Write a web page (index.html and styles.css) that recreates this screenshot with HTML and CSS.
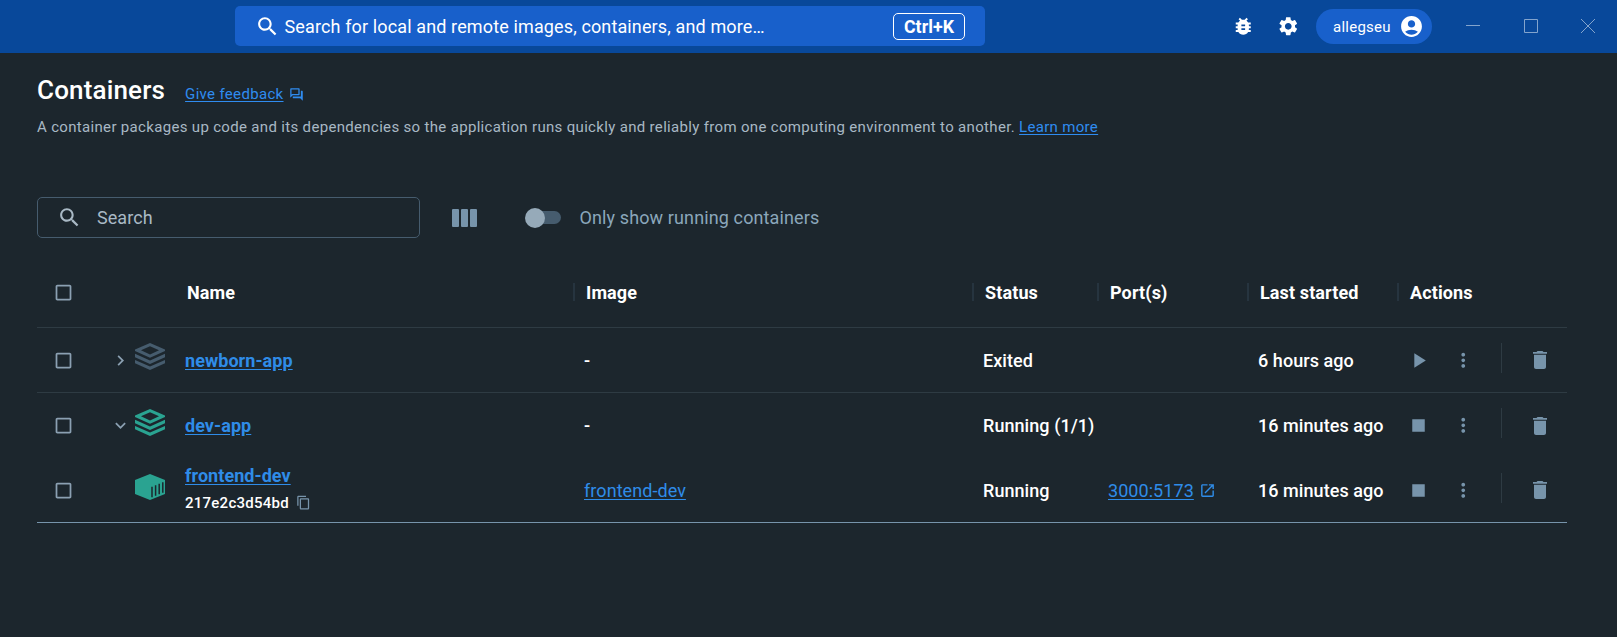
FILE: index.html
```html
<!DOCTYPE html>
<html lang="en">
<head>
<meta charset="utf-8">
<title>Containers</title>
<link rel="stylesheet" href="styles.css">
</head>
<body>
<svg class="defs" aria-hidden="true">
  <symbol id="search" viewBox="0 0 24 24"><path d="M15.5 14h-.79l-.28-.27C15.41 12.59 16 11.11 16 9.5 16 5.91 13.09 3 9.5 3S3 5.91 3 9.5 5.91 16 9.5 16c1.61 0 3.09-.59 4.23-1.57l.27.28v.79l5 4.99L20.49 19l-4.99-5zm-6 0C7.01 14 5 11.99 5 9.5S7.01 5 9.5 5 14 7.01 14 9.5 11.99 14 9.5 14z"/></symbol>
  <symbol id="bug" viewBox="0 0 24 24"><path d="M20 8h-2.81c-.45-.78-1.07-1.45-1.82-1.96L17 4.41 15.59 3l-2.17 2.17C12.96 5.06 12.49 5 12 5c-.49 0-.96.06-1.41.17L8.41 3 7 4.41l1.62 1.63C7.88 6.55 7.26 7.22 6.81 8H4v2h2.09c-.05.33-.09.66-.09 1v1H4v2h2v1c0 .34.04.67.09 1H4v2h2.81c1.04 1.79 2.97 3 5.19 3s4.15-1.21 5.19-3H20v-2h-2.09c.05-.33.09-.66.09-1v-1h2v-2h-2v-1c0-.34-.04-.67-.09-1H20V8zm-6 8h-4v-2h4v2zm0-4h-4v-2h4v2z"/></symbol>
  <symbol id="gear" viewBox="0 0 24 24"><path d="M19.14 12.94c.04-.3.06-.61.06-.94 0-.32-.02-.64-.07-.94l2.03-1.58c.18-.14.23-.41.12-.61l-1.92-3.32c-.12-.22-.37-.29-.59-.22l-2.39.96c-.5-.38-1.03-.7-1.62-.94l-.36-2.54c-.04-.24-.24-.41-.48-.41h-3.84c-.24 0-.43.17-.47.41l-.36 2.54c-.59.24-1.13.57-1.62.94l-2.39-.96c-.22-.08-.47 0-.59.22L2.74 8.87c-.12.21-.08.47.12.61l2.03 1.58c-.05.3-.09.63-.09.94s.02.64.07.94l-2.03 1.58c-.18.14-.23.41-.12.61l1.92 3.32c.12.22.37.29.59.22l2.39-.96c.5.38 1.03.7 1.62.94l.36 2.54c.05.24.24.41.48.41h3.84c.24 0 .44-.17.47-.41l.36-2.54c.59-.24 1.13-.56 1.62-.94l2.39.96c.22.08.47 0 .59-.22l1.92-3.32c.12-.22.07-.47-.12-.61l-2.01-1.58zM12 15.6c-1.98 0-3.6-1.62-3.6-3.6s1.62-3.6 3.6-3.6 3.6 1.62 3.6 3.6-1.62 3.6-3.6 3.6z"/></symbol>
  <symbol id="account" viewBox="0 0 24 24"><path d="M12 2C6.48 2 2 6.48 2 12s4.48 10 10 10 10-4.48 10-10S17.52 2 12 2zm0 4c1.93 0 3.5 1.57 3.5 3.5S13.93 13 12 13s-3.5-1.57-3.5-3.5S10.07 6 12 6zm0 14c-2.03 0-4.43-.82-6.14-2.88C7.55 15.8 9.68 15 12 15s4.45.8 6.14 2.12C16.43 19.18 14.03 20 12 20z"/></symbol>
  <symbol id="forum" viewBox="0 0 24 24"><path d="M15 4v7H5.17L4 12.17V4h11m1-2H3c-.55 0-1 .45-1 1v14l4-4h10c.55 0 1-.45 1-1V3c0-.55-.45-1-1-1zm5 4h-2v9H6v2c0 .55.45 1 1 1h11l4 4V7c0-.55-.45-1-1-1z"/></symbol>
  <symbol id="box" viewBox="0 0 24 24"><path d="M19 5v14H5V5h14m0-2H5c-1.1 0-2 .9-2 2v14c0 1.1.9 2 2 2h14c1.1 0 2-.9 2-2V5c0-1.1-.9-2-2-2z"/></symbol>
  <symbol id="right" viewBox="0 0 24 24"><path d="M10 6 8.59 7.41 13.17 12l-4.58 4.59L10 18l6-6z"/></symbol>
  <symbol id="down" viewBox="0 0 24 24"><path d="M16.59 8.59 12 13.17 7.41 8.59 6 10l6 6 6-6z"/></symbol>
  <symbol id="play" viewBox="0 0 24 24"><path d="M8 5v14l11-7z"/></symbol>
  <symbol id="stop" viewBox="0 0 24 24"><path d="M6 6h12v12H6z"/></symbol>
  <symbol id="more" viewBox="0 0 24 24"><path d="M12 8c1.1 0 2-.9 2-2s-.9-2-2-2-2 .9-2 2 .9 2 2 2zm0 2c-1.1 0-2 .9-2 2s.9 2 2 2 2-.9 2-2-.9-2-2-2zm0 6c-1.1 0-2 .9-2 2s.9 2 2 2 2-.9 2-2-.9-2-2-2z"/></symbol>
  <symbol id="trash" viewBox="0 0 24 24"><path d="M6 19c0 1.100.9 2 2 2h8c1.100 0 2-.9 2-2V6.800H6V19zM19 4h-3.500l-1-1h-5l-1 1H5v1.700h14V4z"/></symbol>
  <symbol id="copy" viewBox="0 0 24 24"><path d="M16 1H4c-1.1 0-2 .9-2 2v14h2V3h12V1zm3 4H8c-1.1 0-2 .9-2 2v14c0 1.1.9 2 2 2h11c1.1 0 2-.9 2-2V7c0-1.1-.9-2-2-2zm0 16H8V7h11v14z"/></symbol>
  <symbol id="open" viewBox="0 0 24 24"><path d="M19 19H5V5h7V3H5c-1.11 0-2 .9-2 2v14c0 1.1.89 2 2 2h14c1.1 0 2-.9 2-2v-7h-2v7zM14 3v2h3.59l-9.83 9.83 1.41 1.41L19 6.41V10h2V3h-7z"/></symbol>
  <symbol id="stack" viewBox="0 0 30 27"><path fill-rule="evenodd" d="M15 0 30 6.500v1.500L15 14.800 0 8v-1.500zM15 3.200 6 7.300 15 11.400 24 7.300zM0 10.800 15 17.400 30 10.800v3.400L15 20.900 0 14.200zM0 16.900 15 23.500 30 16.900v3.400L15 27 0 20.300z"/></symbol>
  <symbol id="cube" viewBox="0 0 30 26"><path d="M15 0 30 6v14L15 26 0 20V6z"/><path class="cube-slots" d="M17 12.700v10.500M20.600 11.200v10.500M24.200 9.700v10.500M27.800 8.200v10.500"/></symbol>
</svg>

<header class="topbar">
  <div class="global-search">
    <svg class="i25"><use href="#search"/></svg>
    <span class="global-text">Search for local and remote images, containers, and more…</span>
    <kbd class="shortcut">Ctrl+K</kbd>
  </div>
  <div class="top-actions">
    <svg class="i22"><use href="#bug"/></svg>
    <svg class="i22"><use href="#gear"/></svg>
    <div class="user"><span>allegseu</span><svg class="i25"><use href="#account"/></svg></div>
  </div>
  <div class="window-controls">
    <svg viewBox="0 0 14 14"><path d="M0 6.500h14"/></svg>
    <svg viewBox="0 0 14 14"><path d="M.5.5h13v13H.5z"/></svg>
    <svg viewBox="0 0 14 14"><path d="M0 0 14 14M14 0 0 14"/></svg>
  </div>
</header>

<main class="page">
  <div class="heading">
    <h1>Containers</h1>
    <a class="feedback"><span class="u">Give feedback</span><svg><use href="#forum"/></svg></a>
  </div>
  <p class="intro">A container packages up code and its dependencies so the application runs quickly and reliably from one computing environment to another. <a class="u">Learn more</a></p>

  <div class="toolbar">
    <div class="filter"><svg class="i25"><use href="#search"/></svg><span>Search</span></div>
    <div class="columns"><i></i><i></i><i></i></div>
    <div class="switch"><i class="thumb"></i></div>
    <span class="switch-label">Only show running containers</span>
  </div>

  <section class="table">
    <div class="row head">
      <div class="check"><svg><use href="#box"/></svg></div><div></div>
      <div class="cell">Name</div><div class="cell sep">Image</div><div class="cell sep">Status</div><div class="cell sep">Port(s)</div><div class="cell sep">Last started</div><div class="cell sep">Actions</div>
    </div>
    <div class="row first">
      <div class="check"><svg><use href="#box"/></svg></div>
      <div class="kind off"><svg class="chev"><use href="#right"/></svg><svg class="stack"><use href="#stack"/></svg></div>
      <div class="cell"><a class="u name">newborn-app</a></div><div class="cell">-</div><div class="cell">Exited</div><div class="cell"></div><div class="cell">6 hours ago</div>
      <div class="actions"><svg class="run"><use href="#play"/></svg><svg class="dots"><use href="#more"/></svg><i class="bar"></i><svg class="del"><use href="#trash"/></svg></div>
    </div>
    <div class="row">
      <div class="check"><svg><use href="#box"/></svg></div>
      <div class="kind"><svg class="chev"><use href="#down"/></svg><svg class="stack"><use href="#stack"/></svg></div>
      <div class="cell"><a class="u name">dev-app</a></div><div class="cell">-</div><div class="cell">Running (1/1)</div><div class="cell"></div><div class="cell">16 minutes ago</div>
      <div class="actions"><svg class="run"><use href="#stop"/></svg><svg class="dots"><use href="#more"/></svg><i class="bar"></i><svg class="del"><use href="#trash"/></svg></div>
    </div>
    <div class="row last">
      <div class="check"><svg><use href="#box"/></svg></div>
      <div class="kind"><svg class="cube"><use href="#cube"/></svg></div>
      <div class="cell double"><a class="u name">frontend-dev</a><span class="hash">217e2c3d54bd<svg><use href="#copy"/></svg></span></div>
      <div class="cell"><a class="u link">frontend-dev</a></div><div class="cell">Running</div>
      <div class="cell"><a class="u link">3000:5173</a><svg class="ext"><use href="#open"/></svg></div><div class="cell">16 minutes ago</div>
      <div class="actions"><svg class="run"><use href="#stop"/></svg><svg class="dots"><use href="#more"/></svg><i class="bar"></i><svg class="del"><use href="#trash"/></svg></div>
    </div>
  </section>
</main>
</body>
</html>
```
FILE: styles.css
```css
* { box-sizing: border-box; }
body { margin: 0; height: 637px; overflow: hidden; background: #1c262d; color: #fff; font-family: Roboto, sans-serif; font-size: 18px; letter-spacing: .06px; }
svg { display: block; flex: none; fill: currentColor; }
.defs { display: none; }
.i25 { width: 25px; height: 25px; }
.i22 { width: 22.5px; height: 22.5px; }
.u { text-decoration: underline; text-underline-offset: 2px; }

.topbar { display: flex; height: 53px; padding-left: 235px; background: #08489a; }
.global-search { display: flex; align-items: center; width: 750px; height: 40px; margin-top: 6px; padding: 0 20px; border-radius: 5px; background: #1860cb; }
.global-text { flex: 1; margin-left: 4.500px; font-size: 18px; letter-spacing: .13px; white-space: nowrap; }
.shortcut { width: 72px; height: 27px; border: 1px solid #fff; border-radius: 5px; font: 700 17.8px/26px Roboto, sans-serif; text-align: center; }
.top-actions { display: flex; align-items: center; gap: 22.500px; margin-left: 247px; color: #fff; }
.user { display: flex; align-items: center; justify-content: space-between; width: 116px; height: 35px; margin-left: -6px; padding: 0 8px 0 17px; border-radius: 18px; background: #1860cb; font-size: 15px; letter-spacing: .25px; }
.window-controls { display: flex; align-items: center; gap: 43.500px; margin: -1px 0 0 34px; }
.window-controls svg { width: 14px; height: 14px; fill: none; stroke: #83a4cd; stroke-width: 1; overflow: visible; }

.page { padding: 21px 50px 0 37px; }
.heading { display: flex; align-items: baseline; height: 40px; }
h1 { margin: 0; font-size: 26px; font-weight: 500; line-height: 32px; letter-spacing: .16px; }
.feedback { display: flex; align-items: center; gap: 5px; margin-left: 20px; font-size: 15px; letter-spacing: .33px; color: #2f8cf0; }
.feedback svg { width: 15px; height: 15px; }
.intro { margin: 3px 0 0; font-size: 15px; line-height: 20px; letter-spacing: .325px; color: #a8b8c4; }
.intro a { color: #2f8cf0; }

.toolbar { display: flex; align-items: center; height: 41px; margin-top: 60px; color: #8ba7bb; }
.filter { display: flex; align-items: center; gap: 15px; width: 383px; height: 41px; padding-left: 19px; border: 1px solid #465c6e; border-radius: 5px; color: #a9b9c5; font-size: 18px; }
.columns { display: flex; gap: 2px; margin-left: 32px; }
.columns i { width: 7px; height: 18px; background: #7794ab; border-radius: 1px; }
.switch { width: 30px; height: 13px; margin-left: 54px; border-radius: 7px; background: #465c6e; }
.thumb { display: block; width: 20px; height: 20px; margin: -3.500px 0 0 -6px; border-radius: 50%; background: #96aab9; }
.switch-label { margin-left: 18.500px; font-size: 18px; letter-spacing: .12px; }

.table { margin-top: 19px; }
.row { display: grid; grid-template-columns: 73px 65px 399px 399px 125px 150px 150px 169px; align-items: center; height: 65px; font-weight: 500; }
.head { height: 71px; border-bottom: 1px solid #2e3b43; font-weight: 700; letter-spacing: .12px; }
.first { border-bottom: 1px solid #2e3b43; }
.last { border-bottom: 1px solid #7794ab; }
.check { padding-left: 15.500px; color: #8ba0b2; }
.check svg { width: 21px; height: 21px; }
.cell { display: flex; align-items: center; padding-left: 10px; white-space: nowrap; }
.head .cell { height: 18px; padding-left: 12px; }
.head .sep { margin-left: -1px; padding-left: 11px; border-left: 2px solid #26343f; }
.name, .link { color: #2f8ce8; }
.name { font-weight: 700; }
.link { font-weight: 400; }
.double { flex-direction: column; align-items: flex-start; gap: 8px; padding-bottom: 3px; line-height: 20px; }
.hash { display: flex; align-items: center; gap: 7px; font-size: 15px; line-height: 18px; letter-spacing: .25px; }
.hash svg { width: 15px; height: 15px; color: #7794ab; }
.ext { width: 17px; height: 17px; margin-left: 5px; color: #2f8ce8; }
.kind { display: flex; align-items: center; justify-content: flex-end; padding-right: 10px; color: #2aa391; }
.off { color: #465c6e; }
.chev { width: 21px; height: 21px; margin-right: 4px; color: #8ba0b2; }
.stack { width: 30px; height: 27px; margin-bottom: 7px; }
.cube { width: 30px; height: 26px; margin-bottom: 7px; }
.cube-slots { fill: none; stroke: #1c262d; stroke-width: 1.500; }
.actions { display: flex; align-items: center; color: #7794ab; }
.run { width: 25px; height: 25px; margin-left: 8px; }
.dots { width: 22.500px; height: 22.500px; margin-left: 21px; }
.bar { width: 1px; height: 30px; margin: 0 26px 5px 26.500px; background: #2e3b43; }
.del { width: 24px; height: 24px; }
```
